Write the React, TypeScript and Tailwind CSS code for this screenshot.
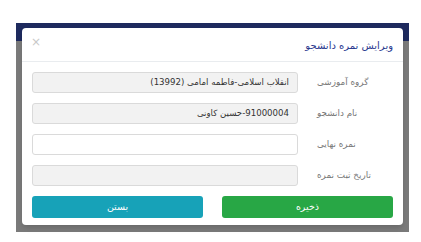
import React from 'react';

const fields = [
  { label: 'گروه آموزشی', value: 'انقلاب اسلامی-فاطمه امامی (13992)', readOnly: true },
  { label: 'نام دانشجو', value: '91000004-حسین کاونی', readOnly: true },
  { label: 'نمره نهایی', value: '', readOnly: false },
  { label: 'تاریخ ثبت نمره', value: '', readOnly: true },
];

export default function App() {
  return (
    <div className="w-[421px] h-[242px] bg-white pt-[23px] pl-[16px] font-['DejaVu_Sans',sans-serif]">
      {/* page behind the dialog, dimmed */}
      <div className="relative w-[393px] h-[209px] bg-[#7a7a7a] pt-[5px] px-[6px]">
        <div className="absolute left-0 top-0 w-full h-[18px] bg-[#1e2a5e]" />

        {/* Modal */}
        <div dir="rtl" className="relative w-[381px] h-[197px] bg-white rounded-[4px] shadow-md">
          {/* Header */}
          <div className="flex items-center justify-between h-[34px] px-[10px] border-b border-[#e9ecef]">
            <h2 className="text-[10px] text-[#2b3a8f] pt-[2px]">ویرایش نمره دانشجو</h2>
            <button className="text-[#c8c8c8] text-[12px] leading-none -mt-[6px] -ml-[1px]">×</button>
          </div>

          {/* Body */}
          <div className="px-[10px] pt-[10px] flex flex-col gap-[10px]">
            {fields.map((f) => (
              <div key={f.label} className="flex items-center">
                <label className="w-[95px] shrink-0 text-left pl-[19px] text-[8.8px] text-[#777]">
                  {f.label}
                </label>
                <div
                  className={`w-[266px] h-[21px] flex items-center px-[8px] rounded-[3px] border border-[#dadada] text-[8.6px] text-[#333] ${
                    f.readOnly ? 'bg-[#f2f2f2]' : 'bg-white'
                  }`}
                >
                  {f.value}
                </div>
              </div>
            ))}

            {/* Footer buttons */}
            <div className="flex gap-[19px]">
              <button className="w-[171px] h-[22px] rounded-[3px] bg-[#28a745] text-white text-[9.5px]">
                ذخیره
              </button>
              <button className="w-[171px] h-[22px] rounded-[3px] bg-[#17a2b8] text-white text-[9.5px]">
                بستن
              </button>
            </div>
          </div>
        </div>
      </div>
    </div>
  );
}
